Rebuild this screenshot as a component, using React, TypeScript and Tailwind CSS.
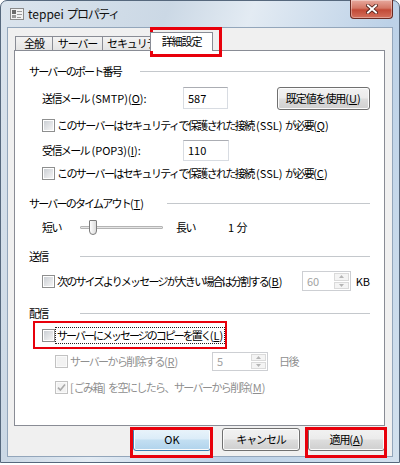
import clsx from "clsx"
import type { ReactNode } from "react"

// Windows 7 style account properties dialog (Advanced tab)

// latin runs keep normal spacing; the kana/kanji around them are set tight
const L = ({ children }: { children: ReactNode }) => <span className="tracking-normal">{children}</span>

function Check({ checked = false, disabled = false }: { checked?: boolean; disabled?: boolean }) {
  return (
    <span
      className={clsx(
        "flex h-[13px] w-[13px] shrink-0 items-center justify-center border",
        disabled ? "border-[#c2c2c2] bg-[#fafafa]" : "border-[#8e8f8f] bg-white"
      )}
    >
      <span
        className={clsx(
          "relative block h-[9px] w-[9px]",
          disabled ? "bg-[#f2f2f2]" : "bg-[linear-gradient(135deg,#cbcfd4,#f5f5f5)]"
        )}
      >
        {checked && (
          <svg width="9" height="9" viewBox="0 0 9 9" className="absolute inset-0 overflow-visible">
            <path d="M1 4.6 L3.4 7 L8 1.6" fill="none" stroke="#a9a9a9" strokeWidth="1.6" />
          </svg>
        )}
      </span>
    </span>
  )
}

function Spinner({ value, className }: { value: string; className: string }) {
  return (
    <div className={clsx("flex border border-[#cdcfd3] bg-white p-px tracking-normal", className)}>
      <span className="flex flex-1 items-center pl-[3px] text-[#a2a2a2]">{value}</span>
      <div className="flex w-[15px] flex-col gap-px">
        <span className="flex flex-1 items-center justify-center border border-[#dadada] bg-[#f4f4f4]">
          <svg width="5" height="3" viewBox="0 0 5 3">
            <path d="M0 3 L2.5 0 L5 3Z" fill="#b5b5b5" />
          </svg>
        </span>
        <span className="flex flex-1 items-center justify-center border border-[#dadada] bg-[#f4f4f4]">
          <svg width="5" height="3" viewBox="0 0 5 3">
            <path d="M0 0 L2.5 3 L5 0Z" fill="#b5b5b5" />
          </svg>
        </span>
      </div>
    </div>
  )
}

function TextBox({ value, className }: { value: string; className: string }) {
  return (
    <div
      className={clsx(
        "flex items-center border border-[#d8dce2] border-t-[#abadb3] bg-white pl-[4px] tracking-normal",
        className
      )}
    >
      {value}
    </div>
  )
}

function Heading({ children, width }: { children: ReactNode; width: string }) {
  return (
    <div className="flex h-[20px] items-center">
      <span className={clsx("shrink-0 tracking-[-1.8px]", width)}>{children}</span>
      <div className="h-px flex-1 bg-[#c4c8cc]" />
    </div>
  )
}

function Button({ children, primary = false, className }: { children: ReactNode; primary?: boolean; className: string }) {
  return (
    <div
      className={clsx(
        "flex h-[23px] items-center justify-center rounded-[3px] border shadow-[inset_0_0_0_1px_#fcfcfc]",
        primary
          ? "border-[#3c7fb1] bg-[linear-gradient(#eaf4fb_0%,#dbecf8_48%,#c3dff2_52%,#b0d3ec_100%)]"
          : "border-[#707070] bg-[linear-gradient(#f2f2f2_0%,#ebebeb_48%,#dddddd_52%,#cfcfcf_100%)]",
        className
      )}
    >
      {children}
    </div>
  )
}

const Tab = ({ children, className }: { children: ReactNode; className: string }) => (
  <div
    className={clsx(
      "mt-[4px] flex h-[14px] items-center justify-center overflow-hidden border border-b-0 border-[#898c95] bg-[linear-gradient(#f3f3f3,#e4e4e4)]",
      className
    )}
  >
    {children}
  </div>
)

export default function App() {
  return (
    <div className="relative h-[465px] w-[400px] whitespace-nowrap bg-white font-['Noto_Sans_CJK_JP','Noto_Sans',sans-serif] text-[11px] leading-none tracking-[-1.6px] text-black">
      <div className="relative flex h-[463px] w-[400px] flex-col rounded-t-[7px] border border-[#56687d] bg-[linear-gradient(110deg,#dbe4ed_0%,#cbd8e5_30%,#e3ebf3_45%,#bcd1e7_70%,#d3e1ee_100%)] px-[6px] pb-[5px]">
        {/* title bar */}
        <div className="flex h-[26px] shrink-0 items-center pl-[3px]">
          <svg width="15" height="14" viewBox="0 0 15 14">
            <rect x="0.5" y="1.5" width="13" height="11" fill="#f3f3f3" stroke="#8a8a8a" />
            <rect x="2" y="3" width="4" height="4" fill="#6b6b6b" />
            <rect x="2" y="8" width="4" height="3" fill="#9a9a9a" />
            <rect x="7" y="4" width="5" height="1" fill="#9a9a9a" />
            <rect x="7" y="7" width="5" height="1" fill="#9a9a9a" />
            <rect x="7" y="10" width="4" height="1" fill="#9a9a9a" />
          </svg>
          <span className="ml-[3px] text-[12px] tracking-[-1.4px] text-[#111]">
            <L>teppei </L>プロパティ
          </span>
        </div>

        <div className="absolute right-[6px] top-[-1px] flex h-[19px] w-[43px] items-center justify-center rounded-b-[4px] border border-t-0 border-[#6b2a22] bg-[linear-gradient(#e7a99e_0%,#d47766_45%,#c24a37_55%,#d4705c_100%)] shadow-[inset_0_0_0_1px_rgba(255,255,255,0.35)]">
          <svg width="12" height="10" viewBox="0 0 12 10">
            <path d="M2 1.5 L10 8.5 M10 1.5 L2 8.5" stroke="#4a1a14" strokeWidth="3.6" strokeLinecap="square" />
            <path d="M2 1.5 L10 8.5 M10 1.5 L2 8.5" stroke="#ffffff" strokeWidth="2" strokeLinecap="square" />
          </svg>
        </div>

        {/* client area */}
        <div className="flex flex-1 flex-col border border-[#93a6bb] bg-[#f0f0f0] pt-[4px]">
          <div className="flex h-[18px] shrink-0 items-start pl-[7px] tracking-[-1.1px]">
            <Tab className="w-[38px]">全般</Tab>
            <Tab className="w-[50px] border-l-0">サーバー</Tab>
            <Tab className="w-[48px] justify-start border-l-0 pl-[4px]">セキュリティ</Tab>
            <div className="relative z-10 -ml-[1px] flex h-[19px] w-[63px] items-start justify-center border border-b-0 border-[#898c95] bg-white pt-[3px]">
              詳細設定
            </div>
          </div>

          {/* tab page */}
          <div className="ml-[6px] mr-[7px] h-[376px] shrink-0 border border-[#898c95] bg-white pl-[14px] pr-[14px] pt-[10px]">
            <Heading width="w-[111px]">サーバーのポート番号</Heading>

            <div className="mt-[5px] flex h-[24px] items-center pl-[13px]">
              <span className="w-[141px] shrink-0">
                送信メール<L>&nbsp;(SMTP)(<u>O</u>):</L>
              </span>
              <TextBox value="587" className="h-[22px] w-[46px]" />
              <Button className="ml-[49px] w-[97px] tracking-[-1.1px]">
                既定値を使用<L>(<u>U</u>)</L>
              </Button>
            </div>

            <div className="mt-[5px] flex h-[20px] items-center gap-[2px] pl-[13px]">
              <Check />
              <span>
                このサーバーはセキュリティで保護された接続<L>&nbsp;(SSL)&nbsp;</L>が必要<L>(<u>Q</u>)</L>
              </span>
            </div>

            <div className="mt-[4px] flex h-[22px] items-center pl-[13px]">
              <span className="w-[141px] shrink-0">
                受信メール<L>&nbsp;(POP3)(<u>I</u>):</L>
              </span>
              <TextBox value="110" className="h-[21px] w-[46px]" />
            </div>

            <div className="mt-[2px] flex h-[20px] items-center gap-[2px] pl-[13px]">
              <Check />
              <span>
                このサーバーはセキュリティで保護された接続<L>&nbsp;(SSL)&nbsp;</L>が必要<L>(<u>C</u>)</L>
              </span>
            </div>

            <div className="mt-[10px]">
              <Heading width="w-[138px]">
                サーバーのタイムアウト<L>(<u>T</u>)</L>
              </Heading>
            </div>

            <div className="mt-[4px] flex h-[20px] items-center pl-[13px]">
              <span className="w-[38px] shrink-0">短い</span>
              <div className="relative h-[3px] w-[83px] shrink-0 rounded-[1px] border border-[#b4b4b4] bg-[#e6e6e6]">
                <div className="absolute left-[8px] top-[-7px] h-[15px] w-[8px] rounded-b-[4px] rounded-t-[1px] border border-[#7c7c7c] bg-[linear-gradient(90deg,#fdfdfd,#dcdcdc)]" />
              </div>
              <span className="ml-[13px] w-[52px] shrink-0">長い</span>
              <span>
                <L>1&nbsp;</L>分
              </span>
            </div>

            <div className="mt-[9px]">
              <Heading width="w-[51px]">送信</Heading>
            </div>

            <div className="mt-[4px] flex h-[22px] items-center pl-[13px]">
              <div className="flex w-[260px] shrink-0 items-center gap-[2px] tracking-[-1.8px]">
                <Check />
                <span>
                  次のサイズよりメッセージが大きい場合は分割する<L>(<u>B</u>)</L>
                </span>
              </div>
              <Spinner value="60" className="h-[20px] w-[50px]" />
              <span className="ml-[5px] tracking-normal">KB</span>
            </div>

            <div className="mt-[11px]">
              <Heading width="w-[51px]">配信</Heading>
            </div>

            <div className="mt-[1px] flex h-[22px] items-center gap-[1px] pl-[13px]">
              <Check />
              <span className="px-[1px] py-[2px] tracking-[-2px] outline outline-1 outline-dotted outline-[#222]">
                サーバーにメッセージのコピーを置く<L>(<u>L</u>)</L>
              </span>
            </div>

            <div className="mt-[5px] flex h-[20px] items-center pl-[26px] text-[#8f8f8f]">
              <div className="flex w-[157px] shrink-0 items-center gap-[2px]">
                <Check disabled />
                <span>
                  サーバーから削除する<L>(<u>R</u>)</L>
                </span>
              </div>
              <Spinner value="5" className="h-[19px] w-[56px]" />
              <span className="ml-[11px]">日後</span>
            </div>

            <div className="mt-[6px] flex h-[20px] items-center gap-[2px] pl-[26px] text-[#8f8f8f]">
              <Check checked disabled />
              <span>
                <L>[</L>ごみ箱<L>]&nbsp;</L>を空にしたら、サーバーから削除<L>(<u>M</u>)</L>
              </span>
            </div>
          </div>

          {/* dialog buttons */}
          <div className="mt-[2px] flex justify-end pr-[7px] tracking-[-1.1px]">
            <Button primary className="w-[78px] tracking-normal">
              OK
            </Button>
            <Button className="ml-[11px] w-[78px]">キャンセル</Button>
            <Button className="ml-[8px] w-[77px]">
              適用<L>(<u>A</u>)</L>
            </Button>
          </div>
        </div>
      </div>

      {/* red highlight boxes */}
      <div className="absolute left-[150px] top-[27px] h-[30px] w-[72px] border-[3px] border-[#e8000b]" />
      <div className="absolute left-[33px] top-[321px] h-[28px] w-[194px] border-2 border-[#e8000b]" />
      <div className="absolute left-[130px] top-[427px] h-[31px] w-[83px] border-[3px] border-[#e8000b]" />
      <div className="absolute left-[305px] top-[427px] h-[31px] w-[82px] border-[3px] border-[#e8000b]" />
    </div>
  )
}
